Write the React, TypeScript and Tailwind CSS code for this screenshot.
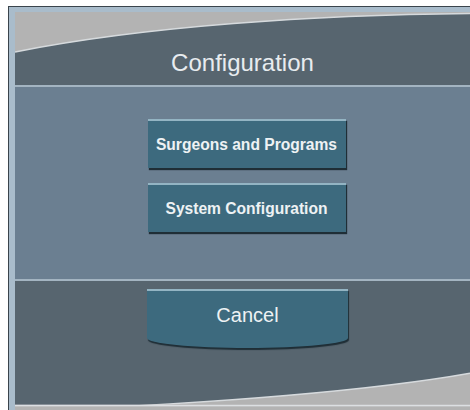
import React from "react";

const font = { fontFamily: '"Liberation Sans", Arial, sans-serif' };

function MenuButton({ label }: { label: string }) {
  return (
    <button
      className="w-[198px] h-[49px] bg-[#3d6a7e] border-t-2 border-[#93b4c3] text-[15.6px] font-bold text-[#eef2f4] shadow-[1px_2px_1px_#1f2e36]"
      style={font}
    >
      {label}
    </button>
  );
}

export default function App() {
  return (
    <div className="w-[470px] h-[410px] bg-white pl-[8px] pt-[6px] overflow-hidden" style={font}>
      <div className="h-full border-t border-l border-[#3a444c]">
        <div className="h-full flex flex-col border-t-[5px] border-l-[6px] border-[#a9bccb]">
          {/* Header */}
          <div className="relative h-[73px] bg-[#57656f] flex items-center justify-center">
            <svg className="absolute inset-0 w-full h-full" viewBox="0 0 454 73" preserveAspectRatio="none">
              <path d="M0 0 H454 V1.5 C300 3 130 14 0 40 Z" fill="#b3b3b3" />
              <path d="M454 1.5 C300 3 130 14 0 40" fill="none" stroke="#d6dadd" strokeWidth="1.5" />
            </svg>
            <span className="relative mt-[28px] text-[24px] text-[#e8ecef]">Configuration</span>
          </div>
          <div className="h-[2px] bg-[#a3b4c1]" />

          {/* Options */}
          <div className="h-[192px] bg-[#6b7f91] flex flex-col items-center pt-[32px] gap-[15px] pl-[8px]">
            <MenuButton label="Surgeons and Programs" />
            <MenuButton label="System Configuration" />
          </div>
          <div className="h-[2px] bg-[#a3b4c1]" />

          {/* Footer */}
          <div className="relative flex-1 bg-[#57656f] flex justify-center pt-[8px] pl-[10px]">
            <svg className="absolute inset-0 w-full h-full" viewBox="0 0 454 123" preserveAspectRatio="none">
              <path d="M454 88 C360 104 200 117 30 123 H454 Z" fill="#b3b3b3" />
              <path d="M454 88 C360 104 200 117 30 123" fill="none" stroke="#d6dadd" strokeWidth="1.5" />
              <rect x="0" y="118" width="454" height="5" fill="#b3b3b3" />
              <rect x="0" y="118" width="454" height="1.5" fill="#dcdfe2" />
            </svg>
            <button
              className="relative w-[201px] h-[59px] bg-[#3d6a7e] border-t-2 border-[#93b4c3] rounded-b-[50%_10px] text-[20px] text-[#eef2f4] pb-[10px] shadow-[1px_2px_1px_#1f2e36]"
              style={font}
            >
              Cancel
            </button>
          </div>
        </div>
      </div>
    </div>
  );
}
